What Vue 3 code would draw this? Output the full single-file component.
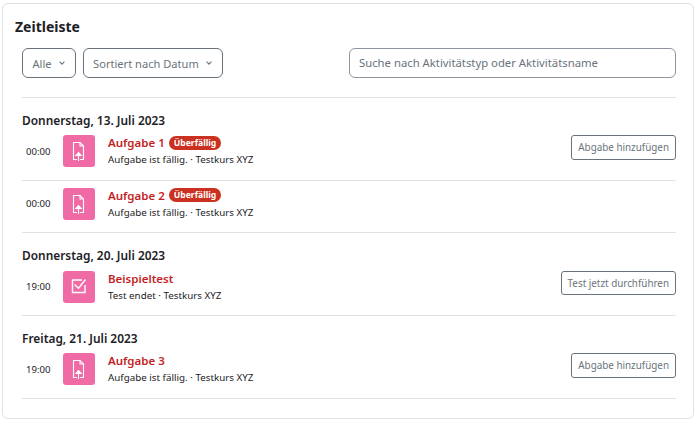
<script setup>
const days = [
  { date: 'Donnerstag, 13. Juli 2023', items: [
    { time: '00:00', title: 'Aufgabe 1', late: true, sub: 'Aufgabe ist fällig. · Testkurs XYZ', action: 'Abgabe hinzufügen', type: 'file' },
    { time: '00:00', title: 'Aufgabe 2', late: true, sub: 'Aufgabe ist fällig. · Testkurs XYZ', type: 'file' },
  ]},
  { date: 'Donnerstag, 20. Juli 2023', items: [
    { time: '19:00', title: 'Beispieltest', sub: 'Test endet · Testkurs XYZ', action: 'Test jetzt durchführen', type: 'quiz' },
  ]},
  { date: 'Freitag, 21. Juli 2023', items: [
    { time: '19:00', title: 'Aufgabe 3', sub: 'Aufgabe ist fällig. · Testkurs XYZ', action: 'Abgabe hinzufügen', type: 'file' },
  ]},
]
</script>

<template>
  <div class="page">
    <section class="card">
      <h2 class="title">Zeitleiste</h2>
      <div class="filters">
        <button class="select">Alle <svg class="chev" viewBox="0 0 6 4"><path d="M.6.7 3 3.100 5.400.7" /></svg></button>
        <button class="select">Sortiert nach Datum <svg class="chev" viewBox="0 0 6 4"><path d="M.6.7 3 3.100 5.400.7" /></svg></button>
        <div class="search">Suche nach Aktivitätstyp oder Aktivitätsname</div>
      </div>
      <div class="list">
        <div v-for="day in days" :key="day.date" class="day">
          <h3 class="date">{{ day.date }}</h3>
          <div v-for="item in day.items" :key="item.title" class="row">
            <div class="time">{{ item.time }}</div>
            <div class="icon">
              <svg v-if="item.type === 'file'" viewBox="0 0 32 32" class="glyph">
                <path d="M14 24.500H10.500V7.500H17L20.500 11V24.500H17" />
                <path d="M17 7.500V11H20.500" />
                <path d="M15.500 26V18" />
                <path class="head-arrow" d="M12.800 20.500 15.500 17.500 18.200 20.500Z" />
              </svg>
              <svg v-else viewBox="0 0 32 32" class="glyph thick">
                <path d="M19 9H9.500V21.500H22V14" />
                <path d="M11.500 13.500 15.500 17.300 22.500 8.500" />
              </svg>
            </div>
            <div class="body">
              <div class="head">
                <a class="link">{{ item.title }}</a>
                <span v-if="item.late" class="badge">Überfällig</span>
              </div>
              <div class="sub">{{ item.sub }}</div>
            </div>
            <button v-if="item.action" class="action">{{ item.action }}</button>
          </div>
        </div>
      </div>
    </section>
  </div>
</template>

<style>
body { margin: 0; background: #fff; }
</style>

<style scoped>
.page {
  width: 697px;
  height: 422px;
  padding: 3px 3px 3px 2px;
  box-sizing: border-box;
  font-family: "Noto Sans", "Open Sans", sans-serif;
  color: #1d2125;
}
.card {
  height: 100%;
  box-sizing: border-box;
  border: 1px solid #dee2e6;
  border-radius: 6px;
  padding: 12px 17px 0 12px;
}
.title {
  margin: 0 0 11px 0;
  font-size: 14px;
  line-height: 21px;
  font-weight: 700;
}
.filters {
  display: flex;
  gap: 7px;
  padding: 0 0 0 7px;
}
.select {
  height: 30px;
  box-sizing: border-box;
  border: 1px solid #6a737b;
  border-radius: 6px;
  background: #fff;
  color: #6a737b;
  font: inherit;
  font-size: 11.100px;
  padding: 0 10px 0 9.500px;
  display: flex;
  align-items: center;
  gap: 7px;
}
.chev { width: 6px; height: 4px; fill: none; stroke: #6a737b; stroke-width: 1.100; }
.search {
  margin-left: auto;
  width: 327px;
  height: 30px;
  box-sizing: border-box;
  border: 1px solid #8f959e;
  border-radius: 6px;
  color: #6a737b;
  font-size: 11.300px;
  line-height: 28px;
  padding: 0 9px;
}
.list { margin: 19px 0 0 7px; border-top: 1px solid #dee2e6; }
.day { padding-top: 15.800px; }
.date {
  margin: 0;
  font-size: 11.900px;
  line-height: 13px;
  padding-bottom: 1px;
  font-weight: 600;
  color: #1d2125;
}
.row {
  display: flex;
  align-items: center;
  padding: 7.400px 0 12.400px;
  border-bottom: 1px solid #dee2e6;
}
.time { width: 41px; padding-left: 4px; box-sizing: border-box; font-size: 9.600px; color: #1d2125; }
.icon {
  width: 32px;
  height: 32px;
  background: #f06ba6;
  border-radius: 3px;
  display: flex;
  align-items: center;
  justify-content: center;
  margin-right: 13px;
}
.glyph { width: 32px; height: 32px; fill: none; stroke: #fff; stroke-width: 1.100; }
.glyph.thick { stroke-width: 1.400; }
.head-arrow { fill: #fff; }
.body { flex: 1; min-width: 0; height: 32px; }
.head { display: flex; align-items: center; gap: 4px; height: 15px; }
.link { color: #c41e24; font-size: 11.500px; font-weight: 600; }
.badge {
  background: #ca3120;
  color: #fff;
  font-size: 8.600px;
  font-weight: 700;
  border-radius: 8px;
  padding: 0 5px;
  line-height: 14px;
}
.sub { font-size: 9.800px; line-height: 19px; color: #1d2125; }
.action {
  align-self: flex-start;
  height: 24.500px;
  box-sizing: border-box;
  border: 1px solid #6a737b;
  border-radius: 3px;
  background: #fff;
  color: #6a737b;
  font: inherit;
  font-size: 9.850px;
  padding: 0 6px;
}
</style>
